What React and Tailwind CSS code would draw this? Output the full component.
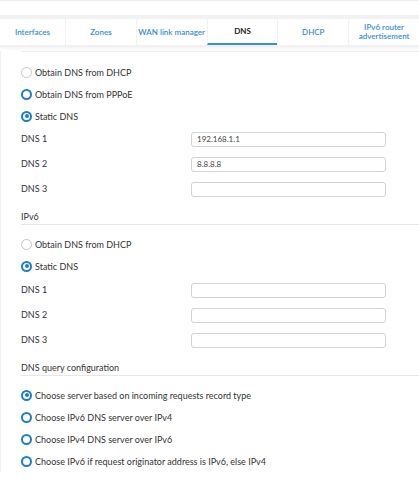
const TABS = ["Interfaces", "Zones", "WAN link manager", "DNS", "DHCP", "IPv6 router advertisement"]

function Radio({ label, state }) {
  // state: "off" (grey), "open" (blue ring), "on" (checked)
  return (
    <div className="flex h-[22px] items-center gap-[3px]">
      <span
        className={`flex h-[11px] w-[11px] shrink-0 items-center justify-center rounded-full border-solid ${
          state === "off" ? "border border-[#c6c6c6]" : "border-2 border-[#1f7ccc]"
        }`}
      >
        {state === "on" && <span className="h-[4px] w-[4px] rounded-full bg-[#1f7ccc]" />}
      </span>
      <span>{label}</span>
    </div>
  )
}

function Fields({ values, top }) {
  return (
    <div className={`flex flex-col gap-[10px] ${top}`}>
      {values.map((v, i) => (
        <div key={i} className="flex h-[15px] items-center">
          <span className="w-[170px] -translate-y-[1px]">DNS {i + 1}</span>
          <div className="flex h-[15px] w-[195px] items-center rounded-[3px] border border-[#cfd3d8] bg-white px-[5px] text-[8px] text-[#444]">
            {v}
          </div>
        </div>
      ))}
    </div>
  )
}

function Heading({ children, top }) {
  return (
    <div className={`border-b border-[#e6e6e6] pb-[2px] leading-[11px] text-[#333] ${top}`}>{children}</div>
  )
}

export default function App() {
  return (
    <div
      className="h-[479px] w-[419px] overflow-hidden bg-white text-[9px] leading-[11px] text-[#333]"
      style={{ fontFamily: "Lato, 'Open Sans', Arial, sans-serif" }}
    >
      {/* top strip */}
      <div className="h-[15px] border-t border-[#eee] bg-white" />
      <div className="h-[4px] bg-[#f2f2f2]" />
      {/* tabs */}
      <div className="grid h-[26px] grid-cols-[65px_repeat(5,1fr)] bg-white text-[8px] font-semibold text-[#3a8dd4]">
        {TABS.map((t, i) => (
          <div
            key={t}
            className={`flex items-center justify-center whitespace-pre-line text-center leading-[9px] ${
              i > 0 ? "border-l border-[#f2f2f2]" : ""
            } ${t === "DNS" ? "border-b-2 border-b-[#3c8fd4] pt-[1px] font-bold text-[#222]" : ""}`}
          >
            {t === "IPv6 router advertisement" ? "IPv6 router\nadvertisement" : t}
          </div>
        ))}
      </div>
      <div className="h-[6px] bg-gradient-to-b from-[#eeeeee] to-white" />
      {/* content */}
      <div className="border-l border-[#f0f0f0] pl-[20px]">
        <div className="border-t border-[#ececec]" />
        <div className="pt-[9px]">
          <Radio label="Obtain DNS from DHCP" state="off" />
          <Radio label="Obtain DNS from PPPoE" state="open" />
          <Radio label="Static DNS" state="on" />
          <Fields values={["192.168.1.1", "8.8.8.8", ""]} top="mt-[5px]" />
        </div>
        <Heading top="mt-[14px]">IPv6</Heading>
        <div className="pt-[8px]">
          <Radio label="Obtain DNS from DHCP" state="off" />
          <Radio label="Static DNS" state="on" />
          <Fields values={["", "", ""]} top="mt-[6px]" />
        </div>
        <Heading top="mt-[14px]">DNS query configuration</Heading>
        <div className="pt-[8px]">
          <Radio label="Choose server based on incoming requests record type" state="on" />
          <Radio label="Choose IPv6 DNS server over IPv4" state="open" />
          <Radio label="Choose IPv4 DNS server over IPv6" state="open" />
          <Radio label="Choose IPv6 if request originator address is IPv6, else IPv4" state="open" />
        </div>
      </div>
    </div>
  )
}
